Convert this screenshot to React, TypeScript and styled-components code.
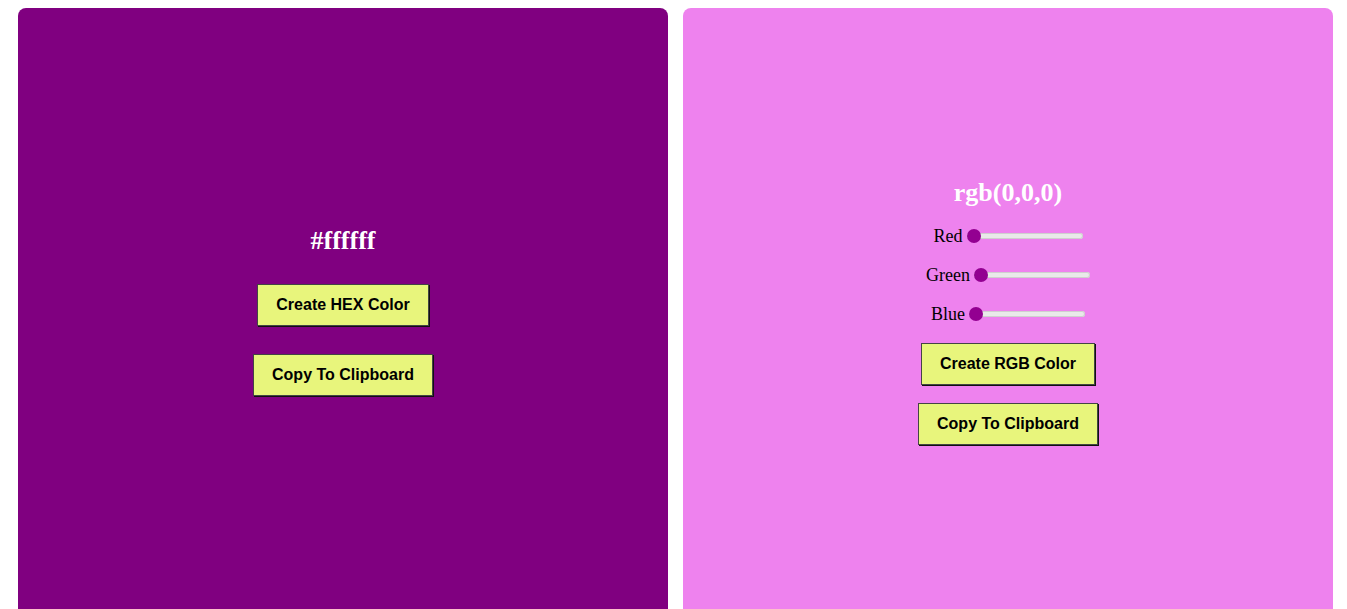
import React, { useState } from "react";
import styled, { createGlobalStyle } from "styled-components";

const GlobalStyle = createGlobalStyle`
  html, body {
    margin: 0;
    overflow: hidden;
  }
  body {
    padding: 8px;
    font-family: "Liberation Serif", "Times New Roman", serif;
  }
`;

const Page = styled.div`
  display: flex;
  gap: 15px;
  padding: 0 10px;
`;

const Panel = styled.section<{ $bg: string; $gap: number }>`
  flex: 0 0 650px;
  height: 612px;
  box-sizing: border-box;
  padding-bottom: 6px;
  border-radius: 8px;
  background: ${(p) => p.$bg};
  display: flex;
  flex-direction: column;
  align-items: center;
  justify-content: center;
  gap: ${(p) => p.$gap}px;
`;

const Heading = styled.h2`
  margin: 0;
  color: #ffffff;
  font-family: "Liberation Serif", "Times New Roman", serif;
  font-size: 26px;
  font-weight: bold;
  line-height: 30px;
`;

const Button = styled.button`
  font-family: "Liberation Sans", Arial, sans-serif;
  font-size: 16px;
  font-weight: bold;
  color: #000;
  line-height: 18px;
  padding: 11px 18px;
  background: #e8f57c;
  border: 1px solid #444;
  box-shadow: 1px 1px 0 #111;
  cursor: pointer;
`;

const SliderRow = styled.label`
  display: flex;
  align-items: center;
  height: 21px;
  font-size: 18px;
  color: #000;
`;

const Range = styled.input`
  -webkit-appearance: none;
  appearance: none;
  width: 116px;
  height: 6px;
  margin: 0 0 0 4px;
  border-radius: 3px;
  background: #e9e9e9;
  box-shadow: inset 0 0 0 1px #cfcfcf;

  &::-webkit-slider-thumb {
    -webkit-appearance: none;
    width: 14px;
    height: 14px;
    border-radius: 50%;
    background: #930091;
    border: none;
  }
`;

function Channel({ name }: { name: string }) {
  const [v, setV] = useState(0);
  return (
    <SliderRow>
      {name}
      <Range type="range" min={0} max={255} value={v} onChange={(e) => setV(+e.target.value)} />
    </SliderRow>
  );
}

export default function App() {
  return (
    <>
      <GlobalStyle />
      <Page>
        <Panel $bg="#800080" $gap={28}>
          <Heading>#ffffff</Heading>
          <Button>Create HEX Color</Button>
          <Button>Copy To Clipboard</Button>
        </Panel>
        <Panel $bg="#ee82ee" $gap={18}>
          <Heading>rgb(0,0,0)</Heading>
          <Channel name="Red" />
          <Channel name="Green" />
          <Channel name="Blue" />
          <Button>Create RGB Color</Button>
          <Button>Copy To Clipboard</Button>
        </Panel>
      </Page>
    </>
  );
}
